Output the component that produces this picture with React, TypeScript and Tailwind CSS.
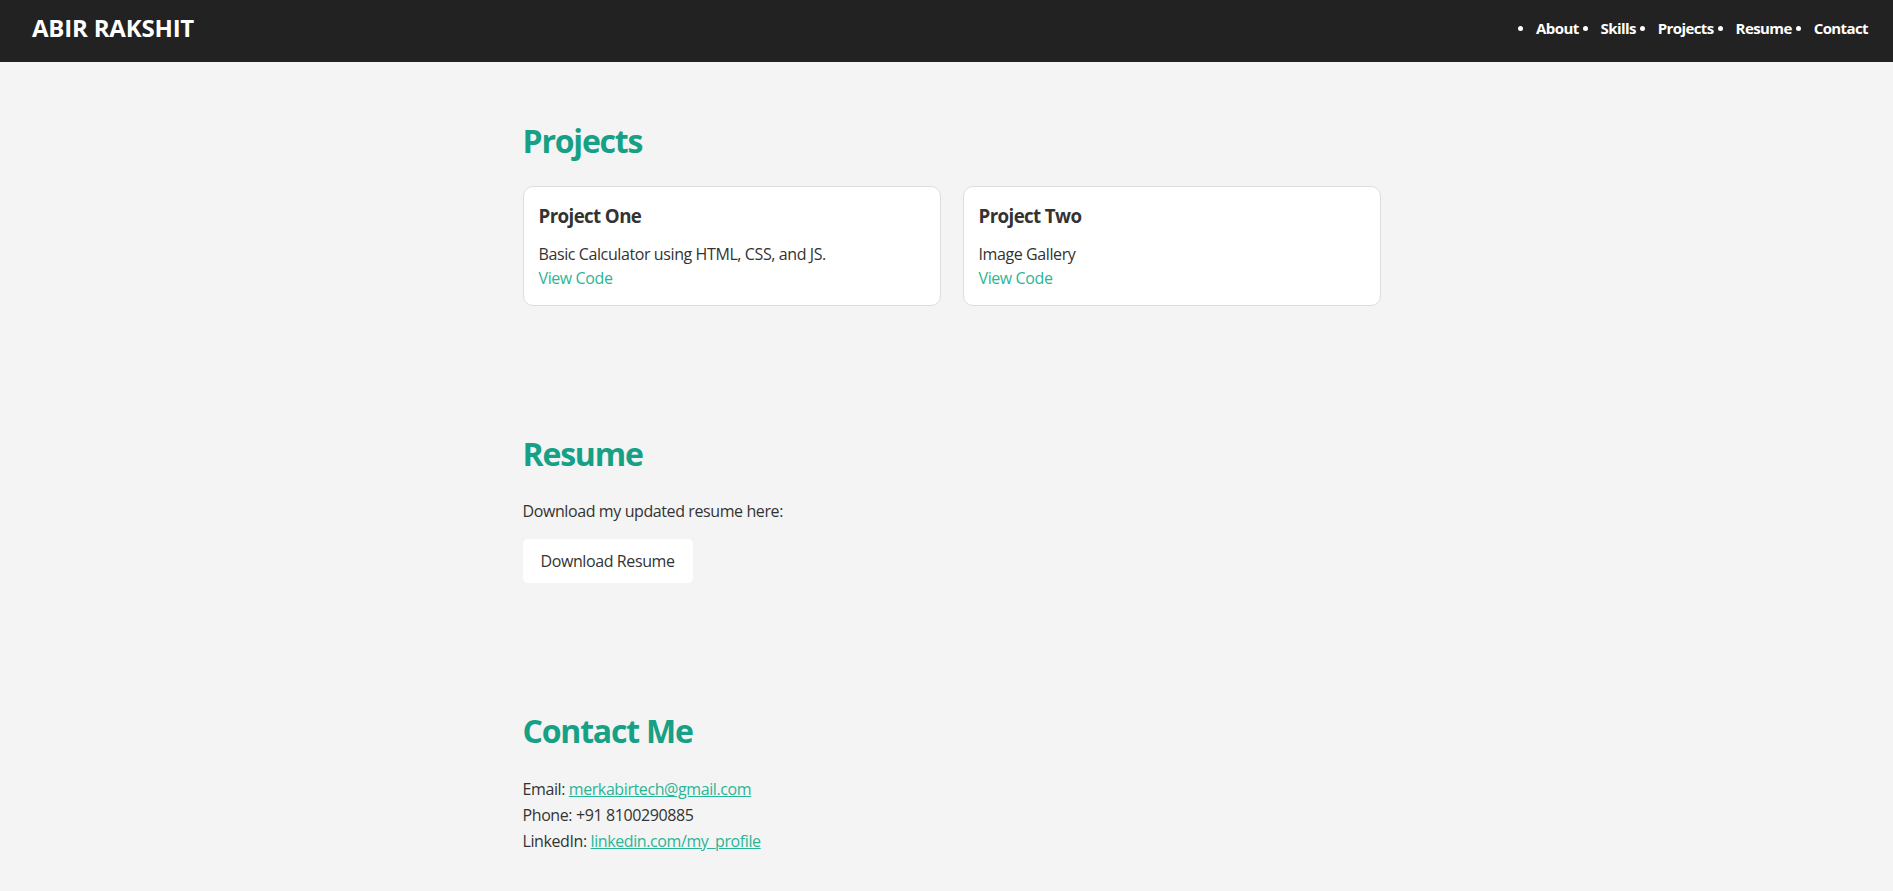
import React from "react";

const navItems = ["About", "Skills", "Projects", "Resume", "Contact"];

const projects = [
  { title: "Project One", desc: "Basic Calculator using HTML, CSS, and JS." },
  { title: "Project Two", desc: "Image Gallery" },
];

export default function App() {
  return (
    <div className="min-h-screen bg-[#f4f4f4] text-[#333] font-['Open_Sans',sans-serif] tracking-[-0.4px]">
      {/* Header */}
      <header className="h-[62px] bg-[#222] flex justify-between pl-[32px] pr-[25px]">
        <h1 className="pt-[16px] text-[24px] leading-[24px] font-bold text-white tracking-[-0.2px]">ABIR RAKSHIT</h1>
        <ul className="flex gap-[4px] pt-[17px] h-fit">
          {navItems.map((item) => (
            <li key={item} className="flex items-center text-[15px] leading-[22px] font-bold text-white tracking-[-0.6px]">
              <span className="w-[5px] h-[5px] rounded-full bg-white" />
              <a className="ml-[13px]">{item}</a>
            </li>
          ))}
        </ul>
      </header>

      <main className="max-w-[868px] mx-auto pl-[10px]">
        {/* Projects */}
        <section className="pt-[55px]">
          <h2 className="text-[32px] leading-[48px] font-bold text-[#16a085] tracking-[-1.2px]">Projects</h2>
          <div className="mt-[21px] grid grid-cols-2 gap-[22px]">
            {projects.map((p) => (
              <div key={p.title} className="bg-white border border-[#ddd] rounded-[10px] p-[15px]">
                <h3 className="text-[18.72px] leading-[28px] font-bold tracking-[-0.6px]">{p.title}</h3>
                <p className="mt-[12px] text-[16px] leading-[24px]">{p.desc}</p>
                <a className="block text-[16px] leading-[24px] text-[#2bb597]">View Code</a>
              </div>
            ))}
          </div>
        </section>

        {/* Resume */}
        <section className="pt-[124px]">
          <h2 className="text-[32px] leading-[48px] font-bold text-[#16a085] tracking-[-1.2px]">Resume</h2>
          <p className="mt-[21px] text-[16px] leading-[24px]">Download my updated resume here:</p>
          <button className="mt-[16px] bg-white rounded-[5px] px-[18px] py-[10px] text-[16px] leading-[24px] text-[#333]">
            Download Resume
          </button>
        </section>

        {/* Contact */}
        <section className="pt-[124px] pb-[40px]">
          <h2 className="text-[32px] leading-[48px] font-bold text-[#16a085] tracking-[-1.2px]">Contact Me</h2>
          <div className="mt-[21px] text-[16px] leading-[26px]">
            <p>
              Email: <a className="underline text-[#2bb597]">merkabirtech@gmail.com</a>
            </p>
            <p>Phone: +91 8100290885</p>
            <p>
              LinkedIn: <a className="underline text-[#2bb597]">linkedin.com/my_profile</a>
            </p>
          </div>
        </section>
      </main>
    </div>
  );
}
